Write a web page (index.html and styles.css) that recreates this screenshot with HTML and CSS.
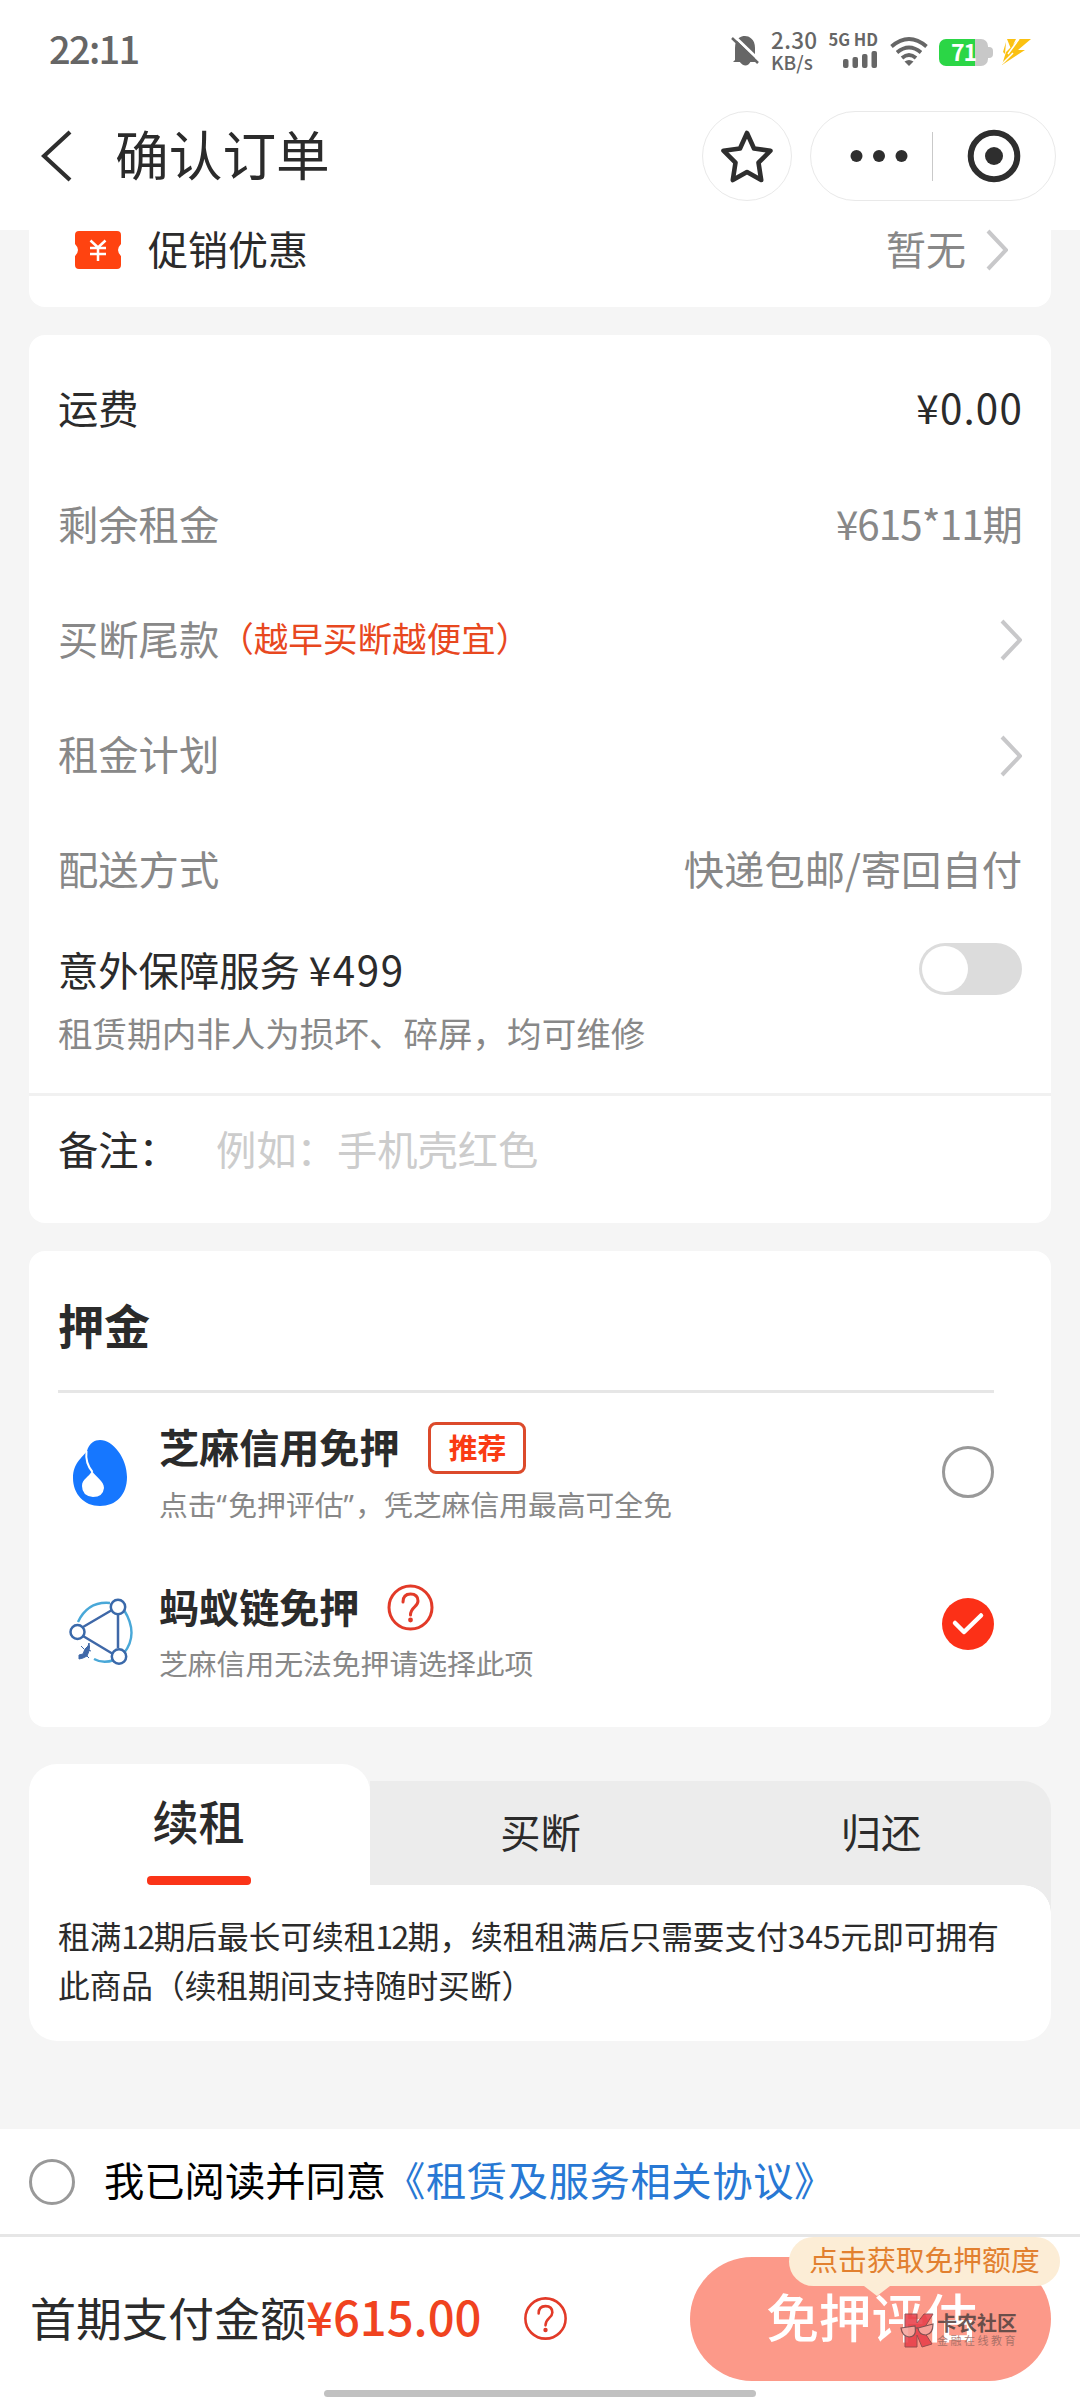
FILE: index.html
```html
<!DOCTYPE html>
<html lang="zh-CN">
<head>
<meta charset="utf-8">
<title>确认订单</title>
<link rel="stylesheet" href="styles.css">
</head>
<body>
<div class="page">
  <header class="header">
    <div class="status">
      <span class="time">22:11</span>
      <div class="status-icons">
        <svg class="bell" width="28" height="32" viewBox="0 0 28 32"><path d="M4 25V13C4 3 10 1 14 1s10 3 10 12v12l2 2H2zM8 26h12q-5 9-12 0z" fill="#666"/><path d="M2 0l27 26" stroke="#fff" stroke-width="3"/><path d="M1 3l26 25" stroke="#666" stroke-width="2.500"/></svg>
        <span class="net"><span class="net-rate">2.30</span><span class="net-unit">KB/s</span></span>
        <span class="cell"><span class="cell-label">5G HD</span>
          <svg width="36" height="17" viewBox="0 0 36 17" fill="#666"><rect x="1" y="8" width="5.500" height="9" rx="2"/><rect x="10.500" y="6" width="5.500" height="11" rx="2"/><rect x="20" y="3" width="5.500" height="14" rx="2"/><rect x="29.500" y="0" width="5.500" height="17" rx="2"/></svg></span>
        <svg class="wifi" width="38" height="30" viewBox="0 0 38 30" fill="none" stroke="#666" stroke-width="3.800"><path d="M1.500 9.500q17.500-15 35 0M7 15.500q12-10 24 0M12 21q7-6 14 0"/><path d="M19 29l-4.500-4.500q4.500-3 9 0z" fill="#666" stroke="none"/></svg>
        <span class="battery"><span class="battery-level">71</span></span>
        <svg class="bolt" width="30" height="26" viewBox="0 0 30 26"><path d="M5 0h9L9 10zM17 0h12L16 11h7L0 26 4 13zM1 13l3-10-1 12z" fill="#fbc112"/><path d="M17 0L6 15M0 25l11-11" stroke="#fff" stroke-width="1.500"/></svg>
      </div>
    </div>
    <div class="nav">
      <svg class="back" width="32" height="52" viewBox="0 0 32 52"><path d="M29 2L3 26l26 24" fill="none" stroke="#2e2e2e" stroke-width="4.200"/></svg>
      <h1 class="title">确认订单</h1>
      <button class="fav"><svg width="52" height="54" viewBox="0 0 52 54"><path d="M26 4l7 15.500 16.500 2.200-12 12 2.700 17.300L26 43 11.800 51l2.700-17.300-12-12L19 19.500z" fill="none" stroke="#2e2e2e" stroke-width="4.600" stroke-linejoin="round"/></svg></button>
      <div class="capsule">
        <svg width="58" height="14" viewBox="0 0 58 14" fill="#2e2e2e"><circle cx="6.500" cy="7" r="6"/><circle cx="29" cy="7" r="6"/><circle cx="51.500" cy="7" r="6"/></svg>
        <i class="capsule-line"></i>
        <svg width="54" height="54" viewBox="0 0 54 54"><circle cx="27" cy="27" r="23.300" fill="none" stroke="#2e2e2e" stroke-width="6"/><circle cx="27" cy="27" r="9" fill="#2e2e2e"/></svg>
      </div>
    </div>
  </header>

  <section class="card promo">
    <svg class="coupon" width="46" height="38" viewBox="0 0 46 38"><path d="M4 0h38q4 0 4 4v9q-6 6 0 12v9q0 4-4 4H4q-4 0-4-4v-9q6-6 0-12V4q0-4 4-4z" fill="#ff4310"/><path d="M15.500 9.500l7.500 7 7.500-7M15 17h16M15 23h16M23 17v13" fill="none" stroke="#fff" stroke-width="2.500"/></svg>
    <span class="promo-name">促销优惠</span>
    <span class="promo-value">暂无</span>
    <svg class="arrow" width="22" height="42" viewBox="0 0 22 42"><path d="M2 2l18 19L2 40" fill="none" stroke="#c8c8ca" stroke-width="4"/></svg>
  </section>

  <section class="card detail">
    <div class="row dark"><span>运费</span><span class="num">¥0.00</span></div>
    <div class="row"><span>剩余租金</span><span class="num-tight">¥615*11期</span></div>
    <div class="row"><span class="label">买断尾款<span class="hint">（越早买断越便宜）</span></span><svg width="22" height="42" viewBox="0 0 22 42"><path d="M2 2l18 19L2 40" fill="none" stroke="#c8c8ca" stroke-width="4"/></svg></div>
    <div class="row"><span>租金计划</span><svg width="22" height="42" viewBox="0 0 22 42"><path d="M2 2l18 19L2 40" fill="none" stroke="#c8c8ca" stroke-width="4"/></svg></div>
    <div class="row"><span>配送方式</span><span>快递包邮/寄回自付</span></div>
    <div class="insure">
      <div><div class="insure-name">意外保障服务 <span class="insure-price">¥499</span></div><div class="insure-desc">租赁期内非人为损坏、碎屏，均可维修</div></div>
      <span class="switch"></span>
    </div>
    <div class="remark"><span class="remark-label">备注：</span><span class="remark-hint">例如：手机壳红色</span></div>
  </section>

  <section class="card deposit">
    <h2 class="deposit-title">押金</h2>
    <div class="option">
      <svg class="option-icon" width="64" height="68" viewBox="0 0 64 68"><path d="M31 1C44 1 58 19 58 38 58 56 47 67 31 67S4 55 4 39C4 24 13 19 18 12 20 4 26 1 31 1z" fill="#1677ff"/><path d="M23 32c4 6 12 10 12 17q-1 9-11 9-11-1-11-11c0-7 7-9 10-15z" fill="#fff"/><path d="M17.500 12q-1.500 12 6 21" fill="none" stroke="#fff" stroke-width="2"/></svg>
      <div class="option-text"><div class="option-name">芝麻信用免押<span class="badge">推荐</span></div><div class="option-desc">点击<span class="quote">“</span>免押评估<span class="quote">”</span>，凭芝麻信用最高可全免</div></div>
      <span class="radio"></span>
    </div>
    <div class="option second">
      <svg class="option-icon" width="64" height="68" viewBox="0 0 64 68" fill="none"><path d="M9 24Q19 3 41 5M55 12q15 24 0 43M25 61q9 5 20 1" stroke="#49a8d8" stroke-width="2.400"/><path d="M14 29l29-17M49 17v33M14 38l30 18" stroke="#3f68a8" stroke-width="2.500"/><g stroke="#3a69aa" stroke-width="2.500"><circle cx="8.500" cy="34" r="7"/><circle cx="49" cy="9" r="7.200"/><circle cx="50" cy="58.500" r="7.200"/></g><path d="M10 57l4-1 2-5 3-3 1-3 .5 4-.5 4-2 5-4 2-4 1zM15 51l-3-3M19 52l3 1M17 57l3 3" fill="#3f68a8" stroke="#3f68a8"/></svg>
      <div class="option-text"><div class="option-name">蚂蚁链免押<svg class="help" width="47" height="47" viewBox="0 0 47 47" fill="none" stroke="#e23a28" stroke-width="3"><circle cx="23.500" cy="23.500" r="21.500"/><path d="M16 18q0-8 7.500-8t7.500 7c0 6-7.500 6-7.500 14" stroke-linecap="round"/><circle cx="23.500" cy="36" r="2.400" fill="#e23a28" stroke="none"/></svg></div><div class="option-desc">芝麻信用无法免押请选择此项</div></div>
      <span class="radio checked"><svg width="34" height="26" viewBox="0 0 34 26"><path d="M4 12l9 9L30 4.500" fill="none" stroke="#fff" stroke-width="4.500" stroke-linecap="round" stroke-linejoin="round"/></svg></span>
    </div>
  </section>

  <section class="tabs">
    <div class="tab-row"><div class="tab active"><span>续租</span><i class="tab-line"></i></div><div class="tab">买断</div><div class="tab last">归还</div></div>
    <div class="tab-panel"><p class="tab-text">租满<span class="term">12</span>期后最长可续租<span class="term">12</span>期，续租租满后只需要支付345元即可拥有<br>此商品（续租期间支持随时买断）</p></div>
  </section>

  <footer class="footer">
    <div class="agree"><span class="agree-radio"></span><span class="agree-text">我已阅读并同意</span><span class="agree-link">《租赁及服务相关协议》</span></div>
    <div class="pay">
      <span class="pay-label">首期支付金额</span><span class="pay-price">¥615.00</span>
      <svg class="pay-help" width="43" height="43" viewBox="0 0 47 47" fill="none" stroke="#e23a28" stroke-width="2.800"><circle cx="23.500" cy="23.500" r="22"/><path d="M16 18q0-8 7.500-8t7.500 7c0 6-7.500 6-7.500 14" stroke-linecap="round"/><circle cx="23.500" cy="36" r="2.400" fill="#e23a28" stroke="none"/></svg>
      <button class="submit">免押评估</button>
      <span class="bubble">点击获取免押额度</span>
      <div class="mark">
        <svg width="34" height="35" viewBox="0 0 34 35"><path d="M5 1h12v9l7-9h9L23 17l9 14-10 3-5-12v12H5z" fill="#e83f4a" stroke="#8a4347"/><g fill="#f6a39c" stroke="#70474a" stroke-width="1.200"><path d="M1 15l14-2q2 11-6 11-7-1-8-9zM18 15l15-4q0 10-7 11-7 0-8-7z"/><path d="M15 15h3"/></g></svg>
        <div class="mark-text"><span class="mark-name">卡农社区</span><span class="mark-sub">金融在线教育</span></div>
      </div>
      <i class="home"></i>
    </div>
  </footer>
</div>
</body>
</html>
```
FILE: styles.css
```css
* { box-sizing: border-box; }
body { margin: 0; background: #f5f5f5; font-family: "Noto Sans CJK SC", sans-serif; }
h1, h2, p { margin: 0; font-weight: 400; }
svg { display: block; flex: none; }
button { padding: 0; margin: 0; font-family: inherit; }
.page { width: 1080px; height: 2400px; display: flex; flex-direction: column; overflow: hidden; color: #2b2b2b; font-size: 40.3px; line-height: 1; white-space: nowrap; }

.header { height: 230px; background: #fff; flex: none; }
.status { height: 104px; padding: 0 48px 0 49px; display: flex; justify-content: space-between; }
.time { margin-top: 29px; font-size: 38px; font-weight: 500; letter-spacing: -1.7px; color: #666; }
.status-icons { display: flex; align-items: flex-start; color: #666; }
.bell { margin: 35px 12px 0 0; }
.net { display: flex; flex-direction: column; width: 46px; padding-top: 28px; font-weight: 500; }
.net-rate { font-size: 22.5px; line-height: 23px; letter-spacing: .3px; }
.net-unit { font-size: 19px; line-height: 19px; margin-top: 1px; }
.cell { display: flex; flex-direction: column; align-items: flex-end; width: 49px; margin: 30px 12px 0 12px; }
.cell-label { font-size: 16.5px; line-height: 19px; font-weight: 700; margin-bottom: 2px; }
.wifi { margin: 37px 11px 0 0; }
.battery { position: relative; width: 49px; height: 27px; margin: 39px 14px 0 0; border-radius: 7px; background: linear-gradient(90deg, #2bd646 36px, #c8c8c8 36px); }
.battery::after { content: ""; position: absolute; right: -5px; top: 8px; width: 5px; height: 11px; border-radius: 0 4px 4px 0; background: #c8c8c8; }
.battery-level { display: block; padding-left: 12px; font-size: 23px; line-height: 25px; font-weight: 700; letter-spacing: -1px; color: #fff; }
.bolt { margin-top: 39px; }
.nav { height: 104px; display: flex; align-items: center; padding: 0 24px 0 41px; }
.back { margin-right: 42px; }
.title { font-size: 53.7px; line-height: 60px; margin-top: -6px; flex: 1; }
.fav { width: 90px; height: 90px; border: 1px solid #e9e9e9; border-radius: 45px; background: #fff; display: flex; align-items: center; justify-content: center; margin-right: 18px; }
.capsule { width: 246px; height: 90px; border: 1px solid #e9e9e9; border-radius: 45px; display: flex; align-items: center; padding-left: 39px; }
.capsule-line { width: 1px; height: 49px; background: #c9c9c9; margin: 0 34px 0 24px; }

.card { margin: 0 29px 28px; background: #fff; border-radius: 16px; flex: none; }
.promo { height: 77px; border-radius: 0 0 16px 16px; display: flex; padding: 0 43px 0 46px; }
.coupon { margin: 1px 27px 0 0; }
.promo-name, .promo-value { line-height: 40px; margin-top: -2px; font-size: 40px; }
.promo-value { margin-left: auto; color: #888; }
.arrow { margin: -1px 0 0 20px; }

.detail { height: 888px; padding-top: 15px; }
.row { height: 115.2px; padding: 0 29px; display: flex; align-items: center; justify-content: space-between; color: #888; }
.row svg { margin-top: 5px; }
.dark { color: #2b2b2b; }
.num { letter-spacing: 1.2px; margin-right: -1px; }
.num-tight { letter-spacing: -.9px; }
.label { display: flex; align-items: center; }
.hint { font-size: 34.6px; color: #e8481f; margin-top: -1px; }
.insure { height: 170px; padding: 18px 29px 0; display: flex; justify-content: space-between; border-bottom: 3px solid #f1f1f1; }
.insure-name { line-height: 44px; padding-top: 3px; }
.insure-price { letter-spacing: 1.6px; }
.insure-desc { font-size: 34.56px; line-height: 40px; margin-top: 21px; color: #888; }
.switch { width: 103px; height: 52px; border-radius: 26px; background: #dcdcdc; padding: 3px; display: block; margin-top: -1px; }
.switch::after { content: ""; display: block; width: 46px; height: 46px; border-radius: 23px; background: #fff; }
.remark { padding: 30px 29px 0; display: flex; line-height: 44px; }
.remark-label { width: 158px; }
.remark-hint { color: #ccc; }

.deposit { height: 476px; padding: 0 57px 0 29px; margin-bottom: 37px; }
.deposit-title { height: 142px; padding-top: 48px; line-height: 50px; font-size: 46.1px; font-weight: 700; border-bottom: 3px solid #e6e6e6; }
.option { display: flex; height: 136px; padding-top: 30px; }
.option.second { height: auto; padding-top: 52px; }
.option-icon { margin: 16px 26px 0 11px; }
.second .option-icon { margin-top: 17px; }
.option-text { flex: 1; }
.option-name { display: flex; align-items: center; height: 52px; font-size: 40.1px; font-weight: 700; margin-top: -3px; }
.badge { width: 98px; height: 52px; margin: 4px 0 0 29px; border: 3px solid #dc4a2b; border-radius: 8px; text-align: center; font-size: 28.8px; line-height: 43px; color: #fa3b13; }
.second .option-name { margin-top: -1px; }
.help { margin: 3px 0 0 28px; }
.option-desc { font-size: 28.8px; line-height: 34px; margin-top: 15px; color: #888; }
.second .option-desc { margin-top: 14px; }
.quote { display: inline-block; width: 11.7px; font-family: "Noto Sans", sans-serif; line-height: 1; }
.radio { width: 52px; height: 52px; margin-top: 23px; border: 3px solid #999; border-radius: 26px; }
.checked { margin-top: 17px; border: 0; background: #fc3017; display: flex; align-items: center; justify-content: center; }

.tabs { margin: 0 29px; height: 277px; flex: none; }
.tab-row { height: 121px; display: flex; align-items: flex-end; }
.tab { width: 341px; height: 104px; background: #ececec; text-align: center; line-height: 100px; }
.active { height: 121px; background: #fff; border-radius: 28px 28px 0 0; font-size: 46.1px; font-weight: 500; line-height: 112px; display: flex; flex-direction: column; align-items: center; padding-right: 2px; }
.tab-line { width: 104px; height: 9px; border-radius: 4px; background: #fa3418; }
.last { width: 340px; border-radius: 0 28px 0 0; }
.tab-panel { height: 156px; background: #fff; border-radius: 0 28px 28px 28px; padding: 26px 29px 0; position: relative; }
.tab-panel::before { content: ""; position: absolute; right: 0; top: 0; width: 28px; height: 28px; background: radial-gradient(circle at 0 100%, transparent 27.5px, #ececec 28px); }
.tab-text { font-size: 31.68px; line-height: 49px; }
.term { letter-spacing: -1.4px; }

.footer { margin-top: 88px; background: #fff; height: 271px; flex: none; }
.agree { height: 108px; border-bottom: 3px solid #e6e6e6; display: flex; align-items: center; padding-left: 29px; color: #000; }
.agree-radio { width: 46px; height: 46px; border: 3px solid #999; border-radius: 23px; margin-right: 29px; }
.agree-text, .agree-link { margin-top: -4px; }
.agree-link { color: #2878d4; margin-left: -1px; letter-spacing: .6px; }
.pay { position: relative; height: 163px; display: flex; align-items: center; padding-left: 30px; }
.pay-label { font-size: 46px; margin-top: -6px; }
.pay-price { font-size: 47.2px; font-weight: 500; color: #f0431f; margin-top: -6px; }
.pay-help { margin-left: 43px; }
.submit { width: 361px; height: 124px; margin: 1px 29px 0 auto; border: 0; border-radius: 62px; background: #fc9989; color: #fff; font-size: 52.7px; font-weight: 500; line-height: 60px; padding: 0 0 9px 2px; }
.bubble { position: absolute; left: 789px; top: 0; width: 271px; height: 49px; border-radius: 25px; background: #fcedd6; color: #e2802f; font-size: 28.8px; line-height: 44px; text-align: center; }
.bubble::after { content: ""; position: absolute; left: 75px; top: 49px; border: 13px solid transparent; border-top: 10px solid #fcedd6; border-bottom: 0; }
.mark { position: absolute; left: 900px; top: 76px; display: flex; gap: 3px; opacity: .88; }
.mark-text { display: flex; flex-direction: column; color: #574442; }
.mark-name { font-size: 20px; line-height: 20px; font-weight: 700; }
.mark-sub { font-size: 11px; line-height: 13px; letter-spacing: 2.5px; margin-top: 1px; color: #a06c64; }
.home { position: absolute; left: 324px; top: 153px; width: 432px; height: 7px; border-radius: 4px; background: #c1c1c1; }
```
